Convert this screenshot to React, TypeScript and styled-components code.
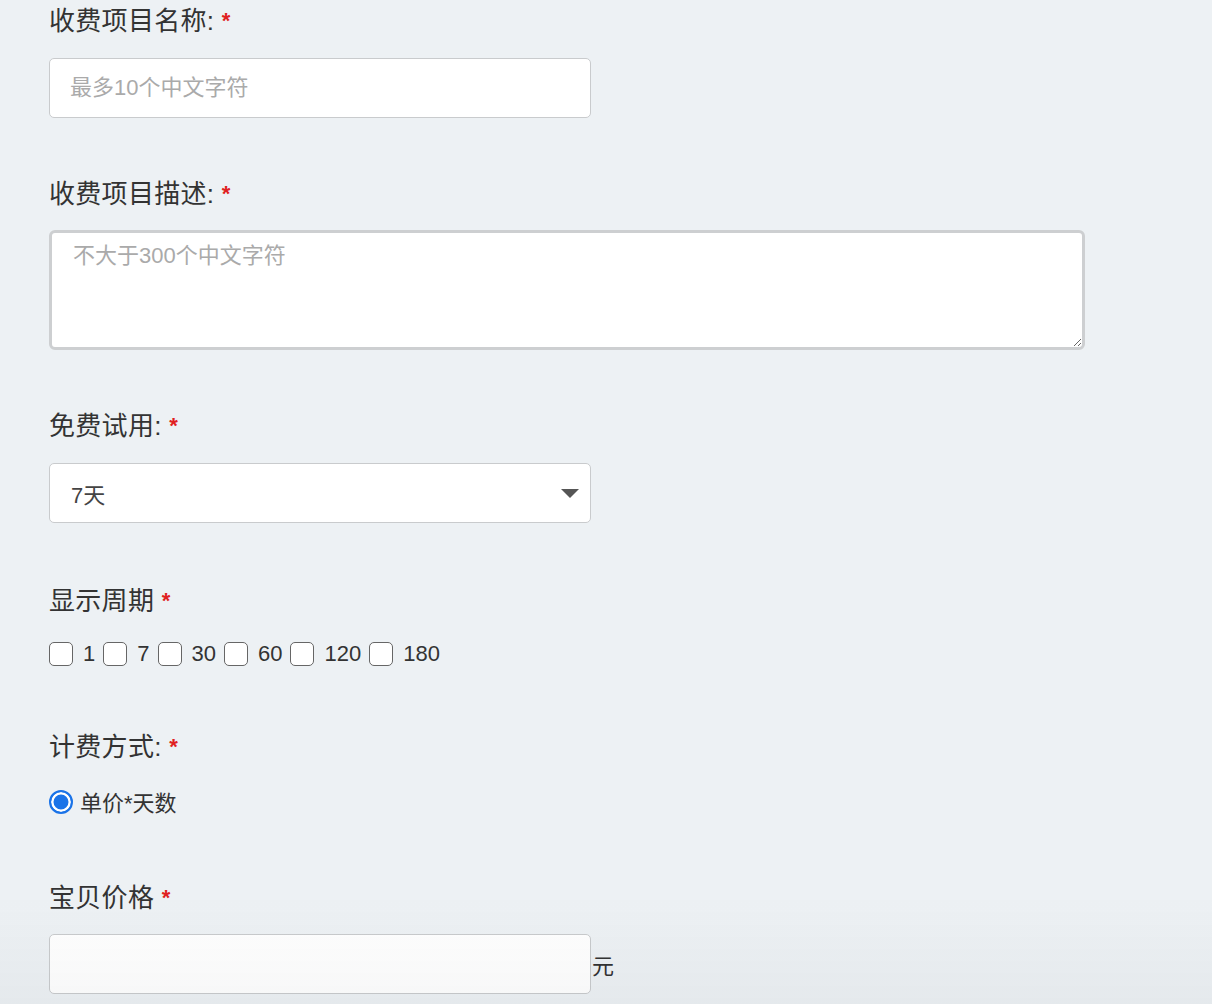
import React from 'react'
import styled, { createGlobalStyle } from 'styled-components'

const GlobalStyle = createGlobalStyle`
  html, body {
    margin: 0;
    padding: 0;
    background: #edf1f4;
  }
  body {
    font-family: "Liberation Sans", "Noto Sans CJK SC", Arial, sans-serif;
    color: #333;
  }
`

const periods = ['1', '7', '30', '60', '120', '180']

export default function App() {
  return (
    <Page>
      <GlobalStyle />
      <Field>
        <Label>收费项目名称: <Star>*</Star></Label>
        <TextInput placeholder="最多10个中文字符" />
      </Field>

      <Field>
        <Label>收费项目描述: <Star>*</Star></Label>
        <TextArea placeholder="不大于300个中文字符" />
      </Field>

      <Field $space={60}>
        <Label>免费试用: <Star>*</Star></Label>
        <SelectBox>
          <span>7天</span>
          <Caret />
        </SelectBox>
      </Field>

      <Field $gap={20} $space={60}>
        <Label>显示周期 <Star>*</Star></Label>
        <OptionRow>
          {periods.map((p) => (
            <CheckItem key={p}>
              <Box />
              <span>{p}</span>
            </CheckItem>
          ))}
        </OptionRow>
      </Field>

      <Field $gap={21} $space={64}>
        <Label>计费方式: <Star>*</Star></Label>
        <OptionRow>
          <RadioItem>
            <Radio />
            <span>单价*天数</span>
          </RadioItem>
        </OptionRow>
      </Field>

      <Field $gap={18} $space={0}>
        <Label>宝贝价格 <Star>*</Star></Label>
        <PriceRow>
          <TextInput />
          <Unit>元</Unit>
        </PriceRow>
      </Field>

      <BottomShade />
    </Page>
  )
}

const Page = styled.div`
  min-height: 1004px;
  box-sizing: border-box;
  padding: 3px 0 0 49px;
  overflow: hidden;
`

const Field = styled.div<{ $gap?: number; $space?: number }>`
  display: flex;
  flex-direction: column;
  align-items: flex-start;
  gap: ${(p) => p.$gap ?? 19}px;
  margin-bottom: ${(p) => p.$space ?? 58}px;
`

const Label = styled.div`
  font-size: 26px;
  line-height: 36px;
  height: 36px;
  color: #333;
  letter-spacing: 0.3px;
`

const Star = styled.span`
  color: #e02020;
  font-size: 22px;
  font-weight: bold;
  vertical-align: 2px;
`

const TextInput = styled.input`
  box-sizing: border-box;
  width: 542px;
  height: 60px;
  padding: 0 20px;
  border: 1px solid #c9cbcd;
  border-radius: 5px;
  background: #fff;
  font-family: inherit;
  font-size: 22px;
  color: #333;
  outline: none;

  &::placeholder {
    color: #aaa;
  }
`

const TextArea = styled.textarea`
  box-sizing: border-box;
  width: 1036px;
  height: 120px;
  padding: 8px 21px;
  border: 3px solid #cdcfd1;
  border-radius: 6px;
  background: #fff;
  font-family: inherit;
  font-size: 22px;
  line-height: 30px;
  color: #333;
  outline: none;
  resize: vertical;
  margin-top: -1px;

  &::placeholder {
    color: #aaa;
  }
`

const SelectBox = styled.div`
  box-sizing: border-box;
  width: 542px;
  height: 60px;
  padding: 0 10px 0 21px;
  border: 1px solid #c9cbcd;
  border-radius: 5px;
  background: #fff;
  display: flex;
  align-items: center;
  justify-content: space-between;
  font-size: 22px;
  color: #444;
`

const Caret = styled.div`
  width: 0;
  height: 0;
  border-left: 9px solid transparent;
  border-right: 9px solid transparent;
  border-top: 9px solid #555;
  margin-right: 1px;
`

const OptionRow = styled.div`
  display: flex;
  align-items: center;
  height: 30px;
  gap: 8px;
`

const CheckItem = styled.label`
  display: flex;
  align-items: center;
  gap: 10px;
  font-size: 22px;
  color: #333;
`

const Box = styled.span`
  box-sizing: border-box;
  width: 24px;
  height: 24px;
  border: 1.5px solid #666;
  border-radius: 5px;
  background: #fff;
`

const RadioItem = styled.label`
  display: flex;
  align-items: center;
  gap: 7px;
  font-size: 22px;
  color: #333;
`

const Radio = styled.span`
  box-sizing: border-box;
  width: 24px;
  height: 24px;
  border-radius: 50%;
  border: 2.5px solid #1a73e8;
  background: #1a73e8;
  box-shadow: inset 0 0 0 2.5px #fff;
  margin-top: 1px;
`

const PriceRow = styled.div`
  display: flex;
  align-items: center;
  gap: 1px;
`

const Unit = styled.span`
  font-size: 22px;
  color: #333;
`

const BottomShade = styled.div`
  position: fixed;
  left: 0;
  right: 0;
  bottom: 0;
  height: 110px;
  pointer-events: none;
  background: linear-gradient(to bottom, rgba(0, 0, 0, 0), rgba(20, 30, 40, 0.035));
`
